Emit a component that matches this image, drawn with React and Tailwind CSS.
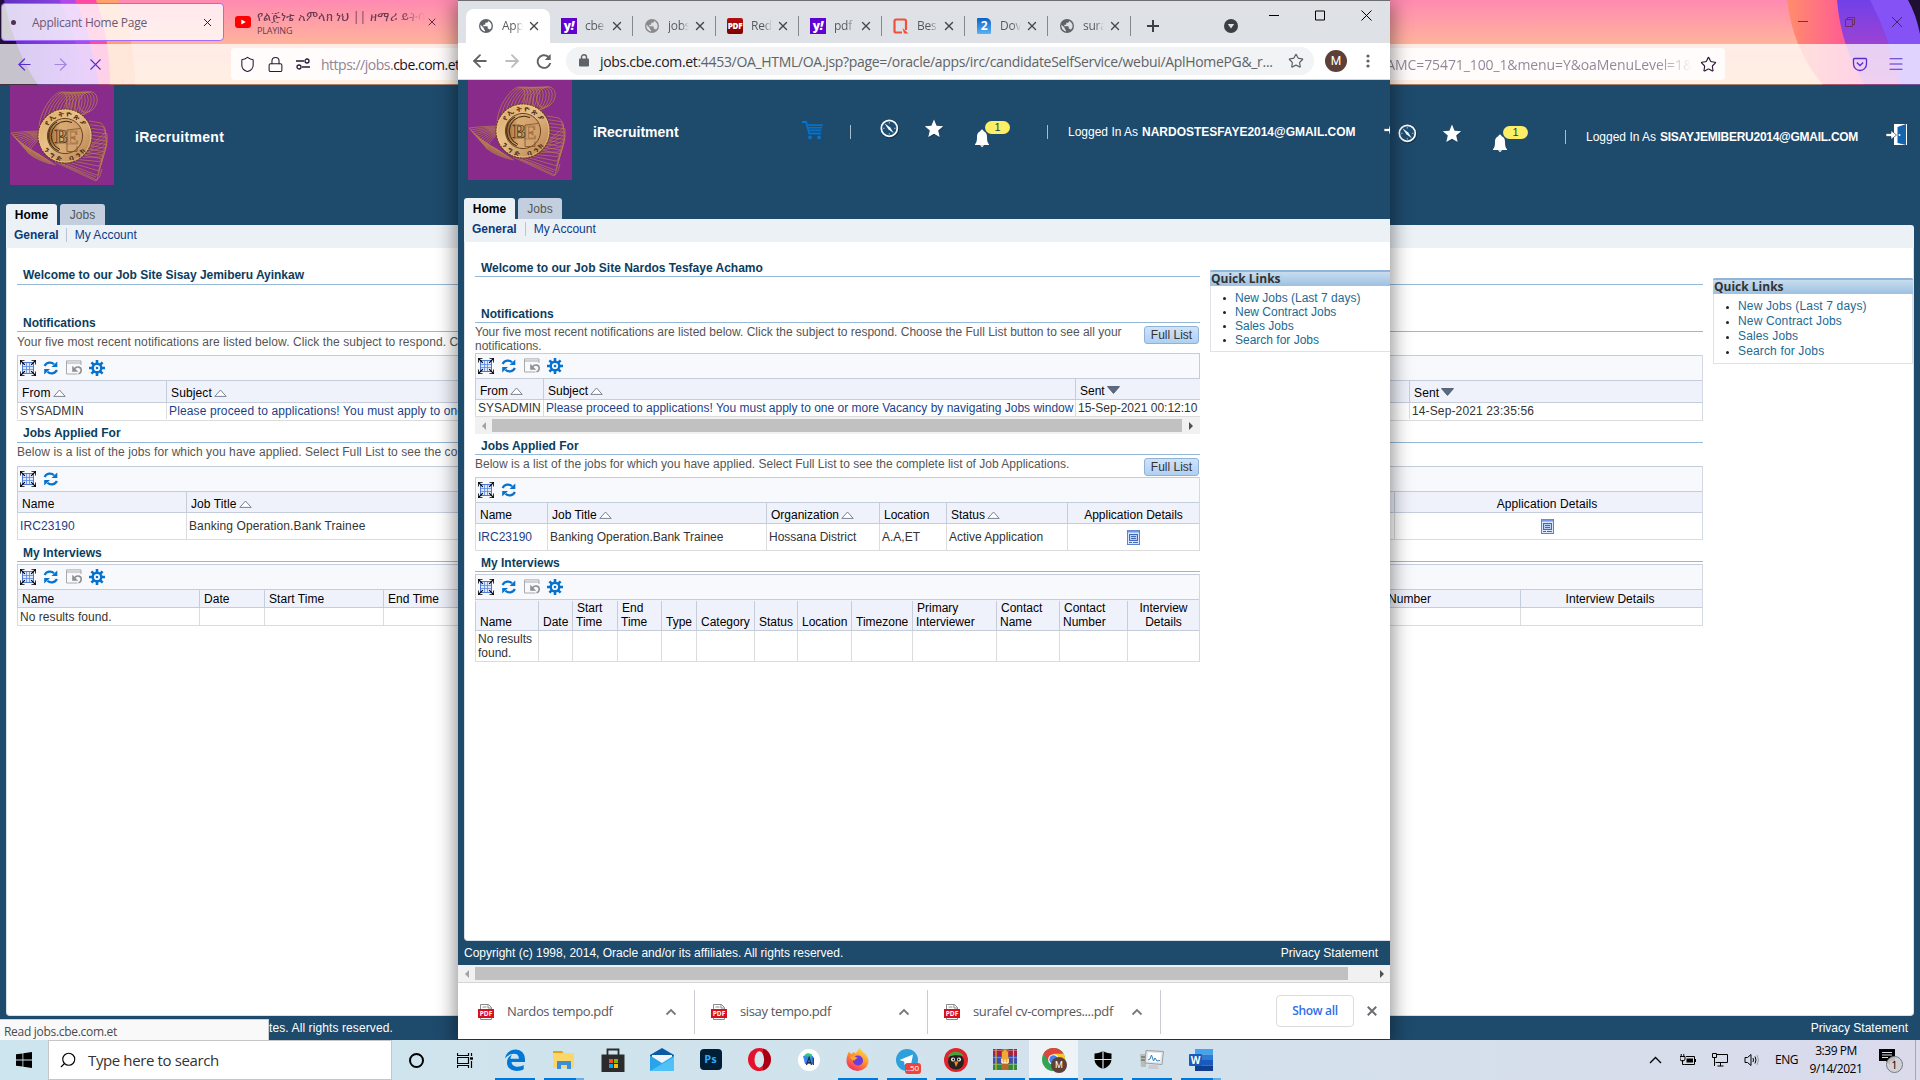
import React from "react";
import { ArrowLeft, ArrowRight, X, Shield, Lock, Star, Menu, Search } from "lucide-react";

const SEGOE = "font-['Open_Sans','Noto_Sans',sans-serif]";
const ARIAL = "font-['Liberation_Sans',Arial,sans-serif]";

/* ---------- Oracle page artwork ---------- */

function CbeLogo() {
  const n = Array.from({ length: 11 }, (_, i) => i);
  return (
    <svg width="104" height="100" viewBox="0 0 104 100" className="block shrink-0 self-start">
      <defs>
        <linearGradient id="coin" x1="0" y1="0" x2="1" y2="1">
          <stop offset="0" stopColor="#d9a763" />
          <stop offset="0.4" stopColor="#e9c08a" />
          <stop offset="1" stopColor="#b27b48" />
        </linearGradient>
        <linearGradient id="coinIn" x1="0" y1="0" x2="1" y2="0">
          <stop offset="0" stopColor="#8a5b2a" />
          <stop offset="0.35" stopColor="#d9ab72" />
          <stop offset="1" stopColor="#cf9c6a" />
        </linearGradient>
        <path id="arcTop" d="M35.200 51a19.800 19.800 0 0 1 39.600 0" />
        <path id="arcBottom" d="M29.800 51a25.200 25.200 0 0 0 50.400 0" />
      </defs>
      <rect width="104" height="100" fill="#882b8a" />
      <g fill="none" stroke="#b98546" strokeWidth="0.65">
        {n.map((i) => (
          <ellipse key={i} cx={43 + i * 3.5} cy={29 - i * 1.2} rx={10 - i * 0.15} ry={24 - i * 1.3} transform={`rotate(${26 + i * 0.6} ${43 + i * 3.5} ${29 - i * 1.2})`} />
        ))}
        {n.map((i) => (
          <path key={i} d={`M30 ${46 + i * 0.9} Q${16 + i} ${46 + i * 0.9} ${1 + i * 1.7} ${48 + i * 2} Q${9 + i * 2} ${58 + i * 1.9} ${30 + i * 1.6} ${70 + i}`} />
        ))}
        {n.map((i) => (
          <path key={i} d={`M${79 - i * 0.6} ${36 + i * 3.4} L${91 + Math.min(i, 3) * 2 - Math.max(0, i - 6) * 1.2} ${38 + i * 3.6} Q${98 - Math.max(0, i - 4) * 1.4} ${45 + i * 4} ${94 - i * 0.7} ${49 + i * 4.600} L${74 - i * 2.2} ${66 + i * 1.3}`} />
        ))}
        <path d="M45 77 86 96Q91 92 92 84M50 78l36 14" />
      </g>
      <circle cx="55" cy="51" r="27" fill="url(#coin)" stroke="#6d431f" strokeWidth="1.4" strokeDasharray="2 .9" />
      <circle cx="55" cy="51" r="26" fill="none" stroke="#f0cc96" strokeWidth="0.7" />
      <g fill="#4a2c14" fontSize="7.500" fontWeight="bold" fontFamily="sans-serif">
        <text><textPath href="#arcTop" startOffset="50%" textAnchor="middle" textLength="42">የኢትዮጵያ</textPath></text>
        <text><textPath href="#arcBottom" startOffset="50%" textAnchor="middle" textLength="48">ንግድ ባንክ</textPath></text>
      </g>
      <circle cx="55" cy="51" r="17.600" fill="url(#coinIn)" stroke="#6a4420" strokeWidth="1" />
      <path d="M62 37.500A14.500 14.500 0 0 0 50 64.500M47 37a16 16 0 0 0 2 29" fill="none" stroke="#3e2510" strokeWidth="1" />
      <path d="M57 66.500V45l13-1.500M57 66.500h10v-5" fill="none" stroke="#7a5028" strokeWidth="0.8" />
      <g fontFamily="Liberation Serif, serif" fontWeight="bold" textAnchor="middle">
        <text x="51" y="58" fontSize="19" fill="#c2915a" stroke="#3e2510" strokeWidth="0.7">B</text>
        <text x="62" y="58.500" fontSize="19" fill="#d2a06c" stroke="#8f6236" strokeWidth="0.6">E</text>
      </g>
    </svg>
  );
}

function Compass() {
  return (
    <svg width="20" height="20" viewBox="0 0 20 20" className="-mr-[2px] block shrink-0">
      <circle cx="10" cy="10" r="8.4" fill="none" stroke="#12324b" strokeWidth="1.6" />
      <circle cx="9.3" cy="9.3" r="8" fill="#1d4f75" stroke="#fff" strokeWidth="1.7" />
      <path d="M9.3 3v1.6M9.3 14v1.6M3 9.3h1.6M14 9.3h1.6" stroke="#9db6c8" strokeWidth="1" />
      <path d="M4.400 4.200 10.200 8.600 13.800 14.200 8.400 10.300Z" fill="#fff" />
    </svg>
  );
}

function SolidStar() {
  return (
    <svg width="20" height="20" viewBox="0 0 20 20" className="block shrink-0">
      <path d="M10.8 1.4 13.4 7.2 19.6 8 15.1 12.3 16.2 18.8 10.8 15.8 5.2 18.8 6.4 12.3 1.8 8 8 7.2Z" fill="#12324b" opacity=".7" />
      <path d="M10 .6 12.6 6.8 19.2 7.3 14.2 11.6 15.7 18.1 10 14.7 4.3 18.1 5.8 11.6.8 7.3 7.4 6.8Z" fill="#fff" />
    </svg>
  );
}

function BellBadge() {
  return (
    <div className="relative mt-1 h-[26px] w-[35px] shrink-0">
      <svg width="15" height="19" viewBox="0 0 15 19" className="absolute top-[8px] left-0">
        <path d="M7 .5c1 0 1.4.8 1.4 1.6C11 3 12 5 12 8c0 4 .5 5.500 2 7.300V16H0v-.7C1.500 13.500 2 12 2 8c0-3 1-5 3.600-5.900C5.600 1.300 6 .5 7 .5Z" fill="#fff" />
        <path d="M5 16.200h4.200L7 18.200Z" fill="#fff" />
      </svg>
      <div className="absolute top-0 left-[10px] flex h-[13px] w-[25px] items-center justify-center rounded-full bg-[#fdee66] text-[11px] leading-none text-[#1e3a55]">1</div>
    </div>
  );
}

function Door() {
  return (
    <svg width="22" height="24" viewBox="0 0 22 24" className="block shrink-0">
      <path d="M8 1h13v21H8z" fill="#fff" />
      <path d="M11.500 4 20 1v21l-8.500-2Z" fill="#1463ad" />
      <circle cx="13.500" cy="12" r="1" fill="#fff" />
      <path d="M0 10.500h5V7.500l5.500 4.500L5 16.500v-3H0Z" fill="#fff" stroke="#12324b" strokeWidth=".6" />
    </svg>
  );
}

function Cart() {
  return (
    <svg width="21" height="19" viewBox="0 0 21 19" className="block shrink-0">
      <path d="M0 1h4.200l3 11.500H19" fill="none" stroke="#0572ce" strokeWidth="1.800" />
      <path d="M5.500 3.200H21l-1.800 7H7.400Z" fill="#0572ce" />
      <path d="M6.500 5.500h14M7 8h13" stroke="#1e4a6c" strokeWidth="1" />
      <circle cx="8" cy="16.500" r="2" fill="#0572ce" />
      <circle cx="17" cy="16.500" r="2" fill="#0572ce" />
    </svg>
  );
}

function Detach() {
  return (
    <svg width="16" height="16" viewBox="0 0 16 16" className="block">
      <rect x="2.500" y="2.500" width="11" height="11" fill="#dfe9fb" stroke="#4a78d4" />
      <path d="M3 6.500h10M3 9.500h10M6.500 3v10M9.500 3v10" stroke="#5a86dc" strokeWidth=".8" />
      <path d="M0 4.500V0h4.500M11.500 0H16v4.500M16 11.500V16h-4.500M4.500 16H0v-4.500" fill="none" stroke="#000" strokeWidth="1.600" />
      <path d="M.5.500l4.300 4.300M15.500.500l-4.300 4.300M.5 15.500l4.300-4.300M15.500 15.500l-4.300-4.300" stroke="#000" strokeWidth="1.200" />
    </svg>
  );
}

function Refresh() {
  return (
    <svg width="16" height="16" viewBox="0 0 16 16" className="block">
      <path d="M1.600 6C3.500 2 8.500 1.800 11 4.300" fill="none" stroke="#0572ce" strokeWidth="2.200" />
      <path d="M14.300 1.500v5.500H8.500Z" fill="#0572ce" />
      <path d="M13.900 10C12 14 7 14.200 4.500 11.700" fill="none" stroke="#0572ce" strokeWidth="2.200" />
      <path d="M1.200 14.500V9H7Z" fill="#0572ce" />
    </svg>
  );
}

function Reset() {
  return (
    <svg width="16" height="16" viewBox="0 0 16 16" className="block">
      <path d="M11.500 14H.5V.9h14.500V5" fill="none" stroke="#a9a9a9" />
      <path d="M1 3h14" stroke="#a9a9a9" />
      <path d="M8 9.200C11 5.500 15.500 7 15.200 10.500c-.2 2-1.500 3-2.700 3.300" fill="none" stroke="#8f8f8f" strokeWidth="1.600" />
      <path d="M6.200 5.800v6h6Z" fill="#8f8f8f" />
    </svg>
  );
}

function Gear() {
  return (
    <svg width="16" height="16" viewBox="0 0 16 16" className="block">
      <g stroke="#0572ce" strokeWidth="2.600">
        <path d="M8 0v3.500M8 12.500V16M0 8h3.500M12.500 8H16M2.400 2.400l2.300 2.300M11.300 11.300l2.300 2.300M2.400 13.600l2.300-2.300M11.300 4.700l2.300-2.300" />
      </g>
      <circle cx="8" cy="8" r="4.300" fill="none" stroke="#0572ce" strokeWidth="2.400" />
      <circle cx="8" cy="8" r="1.300" fill="#0572ce" />
    </svg>
  );
}

const SortUp = () => (
  <svg width="13" height="8" viewBox="0 0 13 8" className="mt-px ml-[2px] block shrink-0">
    <path d="M.8 7.400h11.400L6.500 1Z" fill="#fff" stroke="#6b7687" strokeWidth=".9" />
  </svg>
);
const SortDown = () => (
  <svg width="13" height="8" viewBox="0 0 13 8" className="ml-[2px] block shrink-0">
    <path d="M.5.600h12L6.500 7.400Z" fill="#5a6b82" stroke="#3e4c60" strokeWidth=".8" />
  </svg>
);

function DetailIcon() {
  return (
    <svg width="13" height="15" viewBox="0 0 13 15" className="mx-auto block">
      <rect x=".5" y=".5" width="12" height="14" fill="#dbe7fb" stroke="#5b82cf" />
      <path d="M1 1.500h11" stroke="#6f97e3" strokeWidth="2" />
      <rect x="2.500" y="4.500" width="8" height="6" fill="#b8cef4" stroke="#4169b8" />
      <path d="M4 6.500h5M4 8.500h5M2 12.500h3M6 12.500h5" stroke="#4169b8" />
    </svg>
  );
}

/* ---------- Oracle page structure ---------- */

function PageHeader({ height, left, email, cart, jobs, title }) {
  return (
    <div className={`flex shrink-0 flex-col overflow-hidden bg-[#1e4a6c] text-white ${height}`}>
      <div className="flex h-[104px] shrink-0 items-center whitespace-nowrap">
        <div className={`flex h-full shrink-0 items-center pl-[10px] ${left}`}>
          <CbeLogo />
          <span className={`ml-[21px] text-[14px] font-bold ${title}`}>iRecruitment</span>
          {cart && (
            <div className="ml-auto flex items-center">
              <div className="mb-[4px]"><Cart /></div>
              <div className="mr-[29px] ml-[27px] h-[14px] w-px bg-[#a8bccb]" />
            </div>
          )}
        </div>
        <div className="mb-[6px]"><Compass /></div>
        <div className="mb-[6px] ml-[26px]"><SolidStar /></div>
        <div className="ml-[31px]"><BellBadge /></div>
        <div className="ml-[37px] h-[14px] w-px shrink-0 bg-[#a8bccb]" />
        <span className="ml-[20px] text-[12px]">Logged In As</span>
        <span className={`ml-[4px] text-[12px] font-bold ${email.cls}`}>{email.text}</span>
        <div className="mb-[5px] ml-[28px]"><Door /></div>
      </div>
      <div className="mt-auto flex h-[21px] gap-[3px] pl-[6px] text-[12px]">
        <div className="flex w-[51px] items-center justify-center rounded-t-[3px] bg-[#ecf1f6] font-bold text-black">Home</div>
        <div className={`flex items-center justify-center rounded-t-[3px] bg-[#c3cfdf] text-[#555] ${jobs}`}>Jobs</div>
      </div>
    </div>
  );
}

const SubNav = ({ cls, gap }) => (
  <div className={`flex h-[23px] shrink-0 items-start bg-[#ecf1f6] pt-[3px] pl-[8px] text-[12px] leading-[14px] text-[#0b3a8a] ${cls}`}>
    <span className="font-bold text-[#0b3a7a]">General</span>
    <span className={`mr-[8px] h-[14px] w-px bg-[#b9c5d6] ${gap}`} />
    <span>My Account</span>
  </div>
);

const Heading = ({ cls, children }) => (
  <div className={`flex shrink-0 items-end border-b border-[#94b8d6] pl-[6px] text-[12px] leading-[14px] font-bold text-[#0b3d5e] ${cls}`}>{children}</div>
);

const FullList = ({ cls }) => (
  <div className={`mr-px flex h-[18px] w-[55px] shrink-0 items-center justify-center rounded-[3px] border border-[#8fb2d8] bg-linear-to-b from-[#cfe3f9] to-[#afd0f2] text-[12px] text-[#333] ${cls}`}>Full List</div>
);

const Tools = ({ all }) => (
  <div className="flex h-[25px] items-center gap-[7px] border-t border-l border-[#c5cddb] bg-[#f8f9fd] pl-[2px]">
    <Detach />
    <Refresh />
    {all && <Reset />}
    {all && <Gear />}
  </div>
);

function Grid({ all, cols, head, row, open, cls = "" }) {
  return (
    <div className={`shrink-0 overflow-hidden text-[12px] leading-[14px] whitespace-nowrap ${cls} ${open ? "" : "border-r border-[#d3d9e4]"}`}>
      <div className={open ? "border-r border-[#c5cddb]" : ""}><Tools all={all} /></div>
      <div className={`flex border-t border-[#c5cddb] bg-[#f0f2fb] text-black ${head}`}>
        {cols.map((c, i) => (
          <div key={i} className={`flex shrink-0 border-l border-[#c5cddb] ${c.w} ${c.center ? "justify-center text-center" : c.two ? "pl-[3px] indent-[1px]" : "pl-[4px]"} ${c.t.includes("\n") ? "" : "pt-[5px]"} ${c.headPad || ""}`}>
            <span className="whitespace-pre">{c.t}</span>
            {c.sort === "up" && <span className="pt-[2px]"><SortUp /></span>}
            {c.sort === "down" && <span className="pt-[2px]"><SortDown /></span>}
          </div>
        ))}
      </div>
      <div className={`flex border-t border-b border-[#dcdcdc] border-t-[#c5cddb] bg-white text-[#333] ${row}`}>
        {cols.map((c, i) => (
          <div key={i} className={`flex shrink-0 items-center border-l border-[#dcdcdc] whitespace-pre ${c.w} ${c.center ? "justify-center" : "pl-[2px]"} ${c.link ? "text-[#1b3f8b]" : ""}`}>
            {c.d}
          </div>
        ))}
      </div>
    </div>
  );
}

function QuickLinks({ cls, line }) {
  return (
    <div className={`shrink-0 border border-t-0 border-[#dfe3e8] ${cls}`}>
      <div className="-mx-px flex h-[16px] items-center rounded-t-[2px] border-t-2 border-[#8fb5da] bg-linear-to-b from-[#c9dcee] to-[#9cc1e2] pl-[1px] font-['Open_Sans',sans-serif] text-[12px] leading-none font-bold text-[#333]">Quick Links</div>
      <ul className={`mt-[5px] text-[12px] text-[#1b6a94] ${line}`}>
        {["New Jobs (Last 7 days)", "New Contract Jobs", "Sales Jobs", "Search for Jobs"].map((t) => (
          <li key={t} className="flex items-center">
            <span className="mt-px mr-[9px] ml-[12px] h-[3px] w-[3px] rounded-full bg-[#222]" />
            {t}
          </li>
        ))}
      </ul>
    </div>
  );
}

/* ---------- Firefox window ---------- */

function ThemeArt() {
  return (
    <svg width="1920" height="85" viewBox="0 0 1920 85" className="absolute inset-0">
      <defs>
        <linearGradient id="sky" x1="0" y1="0" x2="0" y2="1">
          <stop offset="0" stopColor="#ff8ab2" />
          <stop offset=".52" stopColor="#ffb49c" />
          <stop offset="1" stopColor="#ffc08f" />
        </linearGradient>
        <linearGradient id="lp" x1="0" x2="1">
          <stop offset="0" stopColor="#5b2fc0" />
          <stop offset="1" stopColor="#a04bf0" />
        </linearGradient>
        <linearGradient id="rp" x1="0" y1="0" x2="0" y2="1">
          <stop offset="0" stopColor="#7140e8" />
          <stop offset="1" stopColor="#c445c0" />
        </linearGradient>
        <linearGradient id="ro" x1="0" x2="1">
          <stop offset="0" stopColor="#ff8d6c" />
          <stop offset=".6" stopColor="#ff4aa2" />
        </linearGradient>
      </defs>
      <rect width="1920" height="85" fill="url(#sky)" />
      <path d="M0 0h118q17 38 17 85H0Z" fill="#ffa06d" />
      <path d="M0 0h96q14 38 14 85H0Z" fill="#ff4aa2" />
      <path d="M0 0h75q14 28 24 85H0Z" fill="#b048ea" />
      <path d="M0 0h60q16 40 28 85H0Z" fill="url(#lp)" />
      <path d="M0 0h4q10 50 34 85H0Z" fill="#221038" />
      <path d="M1787 0q6 50 36 85h97V0Z" fill="url(#ro)" />
      <path d="M1837 0q4 48 28 85h55V0Z" fill="url(#rp)" />
      <path d="M1870 0q20 38 30 85h20V0Z" fill="#8552f5" />
      <path d="M1908 0q8 14 12 34V0Z" fill="#1d1033" />
      <rect y="84" width="1920" height="1" fill="#6b4a50" opacity=".55" />
    </svg>
  );
}

function FirefoxWindow() {
  return (
    <div className="flex h-[1040px] w-[1920px] flex-col bg-[#1e4a6c]">
      <div className={`relative flex h-[85px] shrink-0 flex-col overflow-hidden ${SEGOE}`}>
        <ThemeArt />
        <div className="relative flex h-[44px] items-center pl-px">
          <div className="flex h-[38px] w-[223px] items-center rounded-[4px] border border-[#a36bff] bg-white/80 pr-[9px] pl-[9px] text-[12px] text-[#6b5872]">
            <span className="mr-[16px] h-[5px] w-[5px] rounded-full bg-[#4a3350]" />
            <span className="pt-px tracking-[-0.25px]">Applicant Home Page</span>
            <X size={13} strokeWidth={1.8} className="ml-auto text-[#2a1838]" />
          </div>
          <div className="flex w-[233px] items-center pl-[11px]">
            <svg width="16" height="12" viewBox="0 0 16 12" className="shrink-0">
              <rect width="16" height="12" rx="3" fill="#f00" />
              <path d="M6.300 3.400v5.200L10.800 6Z" fill="#fff" />
            </svg>
            <div className="ml-[6px] flex w-[168px] flex-col overflow-hidden text-[#6a3a52]">
              <span className="bg-linear-to-r from-[#6a3a52] from-85% to-transparent bg-clip-text text-[12.5px] leading-[17px] whitespace-nowrap text-transparent">የልጅነቴ አምላክ ነህ || ዘማሪ ይትባ</span>
              <span className="text-[9px] leading-[11px] tracking-[-0.2px]">PLAYING</span>
            </div>
            <X size={12} strokeWidth={1.8} className="ml-px shrink-0 text-[#4a2038]" />
          </div>
          <div className="mr-[17px] ml-auto flex items-center gap-[35px] text-[#6b2f66]">
            <svg width="12" height="12" viewBox="0 0 12 12"><path d="M1 5.500h10" stroke="currentColor" /></svg>
            <svg width="12" height="12" viewBox="0 0 12 12" fill="none" stroke="currentColor"><path d="M1.500 3.500h7v7h-7zM3.500 3.500v-2h7v7h-2" /></svg>
            <svg width="12" height="12" viewBox="0 0 12 12"><path d="M1 1l10 10M11 1L1 11" stroke="#43207a" /></svg>
          </div>
        </div>
        <div className="relative flex h-[40px] items-center bg-white/75 text-[#5b2bd0]">
          <ArrowLeft size={19} strokeWidth={1.5} className="ml-[15px]" />
          <ArrowRight size={19} strokeWidth={1.5} className="ml-[17px] opacity-45" />
          <X size={19} strokeWidth={1.4} className="ml-[16px]" />
          <div className="ml-[126px] flex h-[32px] w-[1494px] items-center rounded-[4px] bg-white/85 pl-[8px] text-[14px] text-[#8f8498]">
            <Shield size={17} strokeWidth={1.5} className="text-[#2a1838]" />
            <Lock size={17} strokeWidth={1.5} className="ml-[11px] text-[#2a1838]" />
            <svg width="16" height="12" viewBox="0 0 16 12" fill="none" stroke="#2a1838" strokeWidth="1.300" className="ml-[11px]">
              <path d="M1 3h8M7 9h8" /><circle cx="12" cy="3" r="2" /><circle cx="4" cy="9" r="2" />
            </svg>
            <span className="ml-[10px] tracking-[-0.5px]">https://jobs.<span className="text-[#1d0f2b]">cbe.com.et</span></span>
            <span className="ml-auto bg-linear-to-r from-[#8f8498] from-88% to-white bg-clip-text tracking-[-0.1px] text-transparent">AMC=75471_100_1&amp;menu=Y&amp;oaMenuLevel=1&amp;</span>
            <Star size={17} strokeWidth={1.6} className="mr-[8px] ml-[7px] text-[#2a1838]" />
          </div>
          <svg width="16" height="15" viewBox="0 0 16 15" fill="none" stroke="currentColor" strokeWidth="1.300" className="ml-[127px]">
            <path d="M2.500 1.500h11a1 1 0 0 1 1 1V7a6.500 6.500 0 0 1-13 0V2.500a1 1 0 0 1 1-1Z" />
            <path d="M4.800 5.500 8 8.500l3.200-3" />
          </svg>
          <Menu size={18} strokeWidth={1.5} className="ml-[19px]" />
        </div>
      </div>

      <div className={`flex min-h-0 flex-1 flex-col ${ARIAL}`}>
        <PageHeader height="h-[140px]" left="w-[1398px]" title="tracking-[0.3px]" jobs="w-[45px]" email={{ text: "SISAYJEMIBERU2014@GMAIL.COM", cls: "-mr-[0.3px] tracking-[-0.27px]" }} />
        <SubNav cls="ml-[6px] mr-[6px] rounded-tr-[3px]" gap="ml-[7px]" />
        <div className="mr-[6px] ml-[6px] flex h-[768px] shrink-0 rounded-b-[4px] border-x border-b border-[#d8e0ea] bg-white pl-[10px]">
          <div className="flex w-[1686px] shrink-0 flex-col">
            <Heading cls="h-[37px] pb-[2px] tracking-[-0.03px]">Welcome to our Job Site Sisay Jemiberu Ayinkaw</Heading>
            <Heading cls="h-[47px] pb-px">Notifications</Heading>
            <div className="h-[23px] pt-[3px] text-[12px] leading-[14px] tracking-[0.08px] whitespace-nowrap text-[#555]">Your five most recent notifications are listed below. Click the subject to respond. Choose the Full List button to see all your notifications.</div>
            <Grid all cls="tracking-[0.13px]" head="h-[22px]" row="h-[19px] pb-px" cols={[
              { t: "From", sort: "up", d: "SYSADMIN", w: "w-[149px]" },
              { t: "Subject", sort: "up", d: "Please proceed to applications! You must apply to one or more Vacancy by navigating Jobs window", w: "w-[1243px]", link: true },
              { t: "Sent", sort: "down", d: "14-Sep-2021 23:35:56", w: "w-[293px]" },
            ]} />
            <Heading cls="h-[22px] pb-[2px]">Jobs Applied For</Heading>
            <div className="h-[23px] pt-[2px] text-[12px] leading-[14px] tracking-[0.08px] whitespace-nowrap text-[#555]">Below is a list of the jobs for which you have applied. Select Full List to see the complete list of Job Applications.</div>
            <Grid cls="tracking-[0.1px]" head="h-[21px]" row="h-[28px]" cols={[
              { t: "Name", d: "IRC23190", w: "w-[169px]", link: true },
              { t: "Job Title", sort: "up", d: "Banking Operation.Bank Trainee", w: "w-[1208px]" },
              { t: "Application Details", d: <DetailIcon />, w: "w-[305px]", center: true },
            ]} />
            <Heading cls="mb-[2px] h-[22px] pb-px">My Interviews</Heading>
            <Grid all cls="tracking-[0.05px]" head="h-[18px]" row="h-[19px]" cols={[
              { t: "Name", d: "No results found.", w: "w-[182px]", headPad: "!pt-[2px]" },
              { t: "Date", w: "w-[65px]", headPad: "!pt-[2px]" },
              { t: "Start Time", w: "w-[119px]", headPad: "!pt-[2px]" },
              { t: "End Time", w: "w-[1000px]", headPad: "!pt-[2px]" },
              { t: "Number", w: "w-[137px]", headPad: "!pt-[2px]" },
              { t: "Interview Details", w: "w-[179px]", center: true, headPad: "!pt-[2px]" },
            ]} />
          </div>
          <QuickLinks cls="ml-[10px] mt-[30px] h-[86px] w-[200px]" line="leading-[15px] tracking-[0.15px]" />
        </div>
        <div className="flex h-[24px] items-center justify-between pr-[12px] pl-[6px] text-[12px] text-white">
          <span className="tracking-[0.1px]">Copyright (c) 1998, 2014, Oracle and/or its affiliates. All rights reserved.</span>
          <span>Privacy Statement</span>
        </div>
      </div>
      <div className={`absolute top-[1019px] left-0 flex h-[21px] w-[269px] items-center border-t border-r border-[#cfcfcf] bg-[#f9f9f9] pt-[3px] pl-[4px] text-[12px] leading-[16px] tracking-[-0.3px] text-[#4a4a4a] ${SEGOE}`}>Read jobs.cbe.com.et</div>
    </div>
  );
}

/* ---------- Chrome window ---------- */

const Globe = ({ color = "#5f6368" }) => (
  <svg width="16" height="16" viewBox="0 0 24 24" className="shrink-0">
    <path fill={color} d="M12 1.500a10.500 10.500 0 1 0 0 21 10.500 10.500 0 0 0 0-21Zm-1.500 18.800C6.500 19.500 3.600 16.100 3.600 12c0-.6.100-1.200.2-1.700l4.900 4.600v1c0 1.100.8 2 1.800 2v2.400Zm7.100-2.700c-.3-.8-1-1.400-2-1.400h-1v-3c0-.6-.5-1-1-1H8v-2h2c.6 0 1-.5 1-1.100v-2h2c1.200 0 2.100-1 2.100-2.100v-.4c3 1.200 5.300 4.200 5.300 7.400 0 2.200-1 4.200-2.800 5.600Z" />
  </svg>
);
const Yahoo = () => (
  <div className="flex h-4 w-4 shrink-0 items-center justify-center bg-[#6001d2] pb-px font-['Open_Sans',sans-serif] text-[12px] leading-none font-extrabold text-white">y<i>!</i></div>
);
const PdfFav = () => (
  <div className="flex h-4 w-4 shrink-0 items-center justify-center rounded-[2px] bg-linear-to-b from-[#b50f0f] to-[#7c0000] font-['Open_Sans',sans-serif] text-[8px] leading-none font-extrabold tracking-[-0.3px] text-white">PDF</div>
);
const BestFav = () => (
  <svg width="16" height="16" viewBox="0 0 16 16" className="shrink-0">
    <path d="M9 14.500H3a1.500 1.500 0 0 1-1.500-1.500V3A1.500 1.500 0 0 1 3 1.500h8.500A1.500 1.500 0 0 1 13 3v9" fill="none" stroke="#f0503c" strokeWidth="2.200" />
    <path d="M9.500 10 15.500 15.500H11Z" fill="#f0503c" />
  </svg>
);
const TwoFav = () => (
  <div className="mx-px flex h-4 w-[14px] shrink-0 items-center justify-center rounded-[1px] rounded-tr-[5px] bg-linear-to-b from-[#0f5fc4] to-[#56b4f5] font-['Open_Sans',sans-serif] text-[12px] leading-none font-bold text-white">2</div>
);

const TABS = [
  ["cbe", <Yahoo key="i" />],
  ["jobs", <Globe key="i" color="#8a8a8a" />],
  ["Red", <PdfFav key="i" />],
  ["pdf", <Yahoo key="i" />],
  ["Bes", <BestFav key="i" />],
  ["Dov", <TwoFav key="i" />],
  ["sura", <Globe key="i" />],
];

function PdfFile() {
  return (
    <svg width="16" height="16" viewBox="0 0 16 16" className="shrink-0">
      <path d="M2.500 15.500V.5h8l3 3v12Z" fill="#fff" stroke="#8a8a8a" />
      <path d="M10 .5v3.500h3.500M4.500 3h4" fill="none" stroke="#8a8a8a" />
      <rect y="5" width="16" height="9" fill="#d80f1c" />
      <text x="8" y="12" textAnchor="middle" fontSize="6.500" fontWeight="bold" fontFamily="Open Sans, sans-serif" fill="#fff">PDF</text>
    </svg>
  );
}

const DownloadItem = ({ name }) => (
  <div className="flex h-[44px] w-[233px] items-center border-r border-[#c9ccd0] pl-[16px]">
    <PdfFile />
    <span className="ml-[13px] text-[13px] tracking-[-0.35px] whitespace-nowrap text-[#55585c]">{name}</span>
    <svg width="12" height="12" viewBox="0 0 12 12" className="mr-[17px] ml-auto"><path d="M1.500 8.500 6 4l4.500 4.500" fill="none" stroke="#77797c" strokeWidth="1.800" /></svg>
  </div>
);

const Tri = ({ dir, color }) => (
  <svg width="4" height="8" viewBox="0 0 4 8" className="shrink-0">
    <path d={dir === "l" ? "M4 0v8L0 4Z" : "M0 0v8l4-4Z"} fill={color} />
  </svg>
);

function ChromeWindow() {
  return (
    <div className="absolute top-0 left-[458px] flex h-[1039px] w-[932px] flex-col overflow-hidden border-t border-[#6d6d70] bg-white">
      <div className={`flex h-[42px] shrink-0 items-center bg-[#dee1e6] ${SEGOE} text-[12px] tracking-[-0.25px] text-[#54575b]`}>
        <div className="ml-[8px] flex h-[34px] w-[84px] items-center self-end rounded-t-[8px] bg-white pl-[12px]">
          <Globe />
          <span className="ml-[8px] w-[21px] overflow-hidden bg-linear-to-r from-[#54575b] from-60% to-white bg-clip-text text-transparent">App</span>
          <X size={14} strokeWidth={2.400} className="ml-[4px] shrink-0 text-[#45484c]" />
        </div>
        {TABS.map(([t, icon], i) => (
          <div key={i} className="flex w-[83px] shrink-0 items-center pt-[8px] pl-[11px]">
            {icon}
            <span className="ml-[8px] w-[21px] overflow-hidden bg-linear-to-r from-[#54575b] from-60% to-[#dee1e6] bg-clip-text text-transparent">{t}</span>
            <X size={14} strokeWidth={2.400} className="ml-[4px] shrink-0 text-[#45484c]" />
            <span className="ml-auto h-[20px] w-px bg-[#85888d]" />
          </div>
        ))}
        <svg width="14" height="14" viewBox="0 0 14 14" className="mt-[8px] ml-[15px]"><path d="M7 1v12M1 7h12" stroke="#3c4043" strokeWidth="2" /></svg>
        <svg width="14" height="14" viewBox="0 0 14 14" className="mt-[8px] ml-[64px]"><circle cx="7" cy="7" r="7" fill="#3c4043" /><path d="M3.800 5h6.400L7 9.500Z" fill="#dee1e6" /></svg>
        <div className="mr-[18px] ml-auto flex gap-[36px] self-start pt-[9px]">
          <svg width="10" height="11" viewBox="0 0 10 11"><path d="M0 5.500h10" stroke="#000" /></svg>
          <svg width="10" height="11" viewBox="0 0 10 11"><path d="M.5 1h9v9h-9z" fill="none" stroke="#000" /></svg>
          <svg width="11" height="11" viewBox="0 0 11 11"><path d="M.5.500l10 10M10.500.500l-10 10" stroke="#000" /></svg>
        </div>
      </div>
      <div className={`flex h-[37px] shrink-0 items-center border-b border-[#d4d6d9] bg-white pl-[12px] text-[#5f6368] ${SEGOE}`}>
        <ArrowLeft size={20} strokeWidth={2.200} />
        <ArrowRight size={20} strokeWidth={2.200} className="ml-[12px] text-[#bbbdc0]" />
        <svg width="20" height="20" viewBox="0 0 24 24" className="ml-[12px]"><path fill="currentColor" d="M20 3.500 17.700 5.800A8.800 8.800 0 1 0 20.700 14.500H18.300A6.500 6.500 0 1 1 16 7.500L13 10.700h7Z" /></svg>
        <div className="ml-[12px] flex h-[28px] w-[748px] items-center rounded-full bg-[#f1f3f4] pl-[13px] text-[14px]">
          <svg width="10" height="13" viewBox="0 0 10 13" className="mb-px"><rect y="4.500" width="10" height="8" rx="1" fill="currentColor" /><path d="M2.500 5V3.200a2.500 2.500 0 0 1 5 0V5" fill="none" stroke="currentColor" strokeWidth="1.400" /></svg>
          <span className="ml-[11px] tracking-[-0.32px] whitespace-nowrap"><span className="text-[#202124]">jobs.cbe.com.et</span>:4453/OA_HTML/OA.jsp?page=/oracle/apps/irc/candidateSelfService/webui/AplHomePG&amp;_r...</span>
          <Star size={16} strokeWidth={1.800} className="mr-[10px] ml-auto" />
        </div>
        <div className="ml-[11px] flex h-[22px] w-[22px] items-center justify-center rounded-full bg-[#5d4037] font-['Roboto',sans-serif] text-[12px] text-white">M</div>
        <svg width="4" height="14" viewBox="0 0 4 14" className="ml-[19px]"><g fill="currentColor"><circle cx="2" cy="2" r="1.600" /><circle cx="2" cy="7" r="1.600" /><circle cx="2" cy="12" r="1.600" /></g></svg>
      </div>

      <div className={`flex h-[885px] shrink-0 flex-col overflow-hidden bg-[#1e4a6c] ${ARIAL}`}>
        <PageHeader height="h-[139px]" left="w-[422px]" title="" cart jobs="w-[44px]" email={{ text: "NARDOSTESFAYE2014@GMAIL.COM", cls: "tracking-[-0.02px]" }} />
        <SubNav cls="ml-[6px]" gap="ml-[8px]" />
        <div className="ml-[6px] flex h-[699px] shrink-0 rounded-bl-[4px] border-b border-l border-[#d8e0ea] bg-white pl-[10px]">
          <div className="flex w-[725px] shrink-0 flex-col">
            <Heading cls="h-[35px] pb-px">Welcome to our Job Site Nardos Tesfaye Achamo</Heading>
            <Heading cls="h-[46px] pb-px">Notifications</Heading>
            <div className="flex h-[30px] justify-between pt-[2px] text-[12px] leading-[14px] text-[#555]">
              <p className="w-[660px]">Your five most recent notifications are listed below. Click the subject to respond. Choose the Full List button to see all your notifications.</p>
              <FullList cls="mt-px" />
            </div>
            <Grid all open head="h-[21px]" row="h-[18px]" cols={[
              { t: "From", sort: "up", d: "SYSADMIN", w: "w-[68px]" },
              { t: "Subject", sort: "up", d: "Please proceed to applications! You must apply to one or more Vacancy by navigating Jobs window", w: "w-[532px]", link: true },
              { t: "Sent", sort: "down", d: "15-Sep-2021 00:12:10", w: "w-[125px]" },
            ]} />
            <div className="flex h-[17px] shrink-0 items-center bg-[#f1f1f1]">
              <span className="flex w-[17px] justify-center"><Tri dir="l" color="#a3a3a3" /></span>
              <span className="h-[13px] w-[690px] bg-[#c1c1c1]" />
              <span className="flex flex-1 justify-center"><Tri dir="r" color="#505050" /></span>
            </div>
            <Heading cls="h-[21px] pb-px">Jobs Applied For</Heading>
            <div className="flex h-[22px] justify-between pt-[2px] text-[12px] leading-[14px] text-[#555]">
              <p>Below is a list of the jobs for which you have applied. Select Full List to see the complete list of Job Applications.</p>
              <FullList cls="mt-px" />
            </div>
            <Grid head="h-[21px]" row="h-[28px]" cols={[
              { t: "Name", d: "IRC23190", w: "w-[72px]", link: true },
              { t: "Job Title", sort: "up", d: "Banking Operation.Bank Trainee", w: "w-[219px]" },
              { t: "Organization", sort: "up", d: "Hossana District", w: "w-[113px]" },
              { t: "Location", d: "A.A,ET", w: "w-[67px]" },
              { t: "Status", sort: "up", d: "Active Application", w: "w-[121px]" },
              { t: "Application Details", d: <DetailIcon />, w: "w-[132px]", center: true },
            ]} />
            <Heading cls="mb-[2px] h-[21px] pb-px">My Interviews</Heading>
            <Grid all head="h-[31px] items-stretch pt-px" row="h-[32px]" cols={[
              { t: "\nName", d: "No results\nfound.", w: "w-[63px]" },
              { t: "\nDate", w: "w-[34px]" },
              { t: "Start\nTime", w: "w-[45px]", two: true },
              { t: "End\nTime", w: "w-[44px]", two: true },
              { t: "\nType", w: "w-[35px]" },
              { t: "\nCategory", w: "w-[58px]" },
              { t: "\nStatus", w: "w-[43px]" },
              { t: "\nLocation", w: "w-[54px]" },
              { t: "\nTimezone", w: "w-[61px]" },
              { t: "Primary\nInterviewer", w: "w-[84px]", two: true },
              { t: "Contact\nName", w: "w-[63px]", two: true },
              { t: "Contact\nNumber", w: "w-[68px]", two: true },
              { t: "Interview\nDetails", w: "w-[72px]", center: true },
            ]} />
          </div>
          <QuickLinks cls="ml-[10px] mt-[28px] h-[82px] w-[200px]" line="leading-[14px]" />
        </div>
        <div className="flex h-[24px] items-center justify-between pr-[12px] pl-[6px] text-[12px] text-white">
          <span>Copyright (c) 1998, 2014, Oracle and/or its affiliates. All rights reserved.</span>
          <span>Privacy Statement</span>
        </div>
      </div>
      <div className="flex h-[18px] shrink-0 items-center border-b border-[#d4d6d9] bg-[#f1f1f1]">
        <span className="flex w-[17px] justify-center"><Tri dir="l" color="#a3a3a3" /></span>
        <span className="h-[13px] w-[873px] bg-[#c1c1c1]" />
        <span className="mr-[6px] ml-auto"><Tri dir="r" color="#505050" /></span>
      </div>
      <div className={`flex flex-1 items-center bg-white pt-px pl-[4px] ${SEGOE}`}>
        <DownloadItem name="Nardos tempo.pdf" />
        <DownloadItem name="sisay tempo.pdf" />
        <DownloadItem name="surafel cv-compres....pdf" />
        <div className="mb-[2px] ml-auto flex h-[32px] w-[78px] items-center justify-center rounded-[4px] border border-[#dadce0] text-[12px] font-semibold tracking-[-0.3px] text-[#2f6fe8]">Show all</div>
        <svg width="10" height="10" viewBox="0 0 10 10" className="mr-[13px] mb-[2px] ml-[13px]"><path d="M.8.800l8.400 8.400M9.200.800.800 9.200" stroke="#6b6e72" strokeWidth="2" /></svg>
      </div>
    </div>
  );
}

/* ---------- Taskbar ---------- */

const EdgeIcon = () => (
  <svg width="22" height="22" viewBox="0 0 22 22"><path d="M1 9.500C2 3.500 6.500.500 11.500.500c6 0 9.700 4.500 9.500 10.500v2H7.500c.2 3.200 3 4.800 6.200 4.800 2.200 0 4.300-.7 6-1.700v4.200C17.800 21.300 15.500 22 12.700 22 6.800 22 3 18.500 3 13.500c0-3.300 1.800-6.200 5-7.700-1 1.200-1.500 2.500-1.600 3.900h8.500c0-2.900-1.500-4.900-4.900-4.900C6.500 4.800 3 6.800 1 9.500Z" fill="#0078d7" /></svg>
);
const ExplorerIcon = () => (
  <svg width="22" height="20" viewBox="0 0 22 20"><path d="M0 1h9l2 2.500H0Z" fill="#e0a21b" /><path d="M0 3h21v15H0Z" fill="#fcd667" /><path d="M4 19v-8h14v8h-4v-4H8v4Z" fill="#3a8fdc" /></svg>
);
const StoreIcon = () => (
  <svg width="24" height="24" viewBox="0 0 24 24"><path d="M6.500 7V1.500h11V7" fill="none" stroke="#2b2b2b" strokeWidth="1.800" /><path d="M.5 6.500h23V24H.5Z" fill="#2b2b2b" /><path d="M8 11h4v4H8z" fill="#f25022" /><path d="M13 11h4v4h-4z" fill="#7fba00" /><path d="M8 16h4v4H8z" fill="#00a4ef" /><path d="M13 16h4v4h-4z" fill="#ffb900" /></svg>
);
const MailIcon = () => (
  <svg width="24" height="23" viewBox="0 0 24 23"><path d="M0 7 12 0l12 7v6H0Z" fill="#0b5aa8" /><path d="M2 7h20v10H2Z" fill="#eef4fa" /><path d="M0 7.500 12 15l12-7.500V23H0Z" fill="#29a4ea" /><path d="M0 23 24 9v14Z" fill="#4fc1f5" /></svg>
);
const PsIcon = () => (
  <div className="flex h-[21px] w-[22px] items-center justify-center rounded-[4px] bg-[#001e36] font-['Open_Sans',sans-serif] text-[11px] font-bold text-[#31a8ff]">Ps</div>
);
const OperaIcon = () => (
  <svg width="23" height="23" viewBox="0 0 23 23"><ellipse cx="11.500" cy="11.500" rx="11.500" ry="11.500" fill="#e4122b" /><path d="M15 .600a11.500 11.500 0 0 1 0 21.800Z" fill="#a70014" /><ellipse cx="11.300" cy="11.500" rx="4.800" ry="8.300" fill="#d3e7ef" /></svg>
);
const StudioIcon = () => (
  <svg width="22" height="22" viewBox="0 0 22 22"><circle cx="11" cy="11" r="11" fill="#fff" /><path d="M5 7h10v8H7Z" fill="#3f84f2" /><path d="M6 7a5 4.500 0 0 1 8.500-1L13 8Z" fill="#35c97b" /><path d="M8.500 16l2.600-7.500L13.500 16M9.500 13.500h3M15.300 8.500v7.500" stroke="#173049" strokeWidth="1.200" fill="none" /></svg>
);
const FirefoxIcon = () => (
  <svg width="23" height="23" viewBox="0 0 23 23"><defs><linearGradient id="ffx" x1=".8" y1="0" x2=".2" y2="1"><stop offset="0" stopColor="#ffe14a" /><stop offset=".5" stopColor="#ff8a2a" /><stop offset="1" stopColor="#f0246e" /></linearGradient></defs><path d="M14 0c1 3 3 3.500 5 5.500 2 2 3.500 4.500 3.500 7.500a11 10 0 0 1-22 0C.500 9 1.500 6.500 3 3.500L5 6l3-2 2 1.500C11 3 12.500 1 14 0Z" fill="url(#ffx)" /><circle cx="12" cy="12.500" r="5" fill="#6a3ce0" /><path d="M4 9c3-2 6 0 8 1-2 .5-3 1.500-3 2.500-2.500 0-4-1.500-5-3.500Z" fill="#ffa62e" /></svg>
);
const TelegramIcon = () => (
  <div className="relative">
    <svg width="22" height="22" viewBox="0 0 22 22"><circle cx="11" cy="11" r="11" fill="#2ca0da" /><path d="M3.500 11 17 5.500 14.800 17l-4-3L8.500 16l-.3-3.500Z" fill="#fff" /></svg>
    <div className="absolute top-[14px] left-[9px] flex h-[11px] w-[16px] items-center justify-center rounded-[3px] bg-[#f0413a] font-['Open_Sans',sans-serif] text-[8px] leading-none text-white">..50</div>
  </div>
);
const BirdIcon = () => (
  <svg width="24" height="24" viewBox="0 0 24 24"><circle cx="12" cy="12" r="12" fill="#e0242c" /><circle cx="12" cy="13.500" r="8" fill="#26221f" /><path d="M3.500 9C6 3 16 1.500 20 8.500 15 6.500 9 7 3.500 9Z" fill="#43a53c" /><circle cx="9" cy="11.500" r="2" fill="#fff" /><circle cx="15" cy="11.500" r="2" fill="#fff" /><circle cx="9.300" cy="11.500" r=".9" /><circle cx="14.700" cy="11.500" r=".9" /><path d="M10 13.500h4.500L12 19Z" fill="#f08a24" /></svg>
);
const WinrarIcon = () => (
  <svg width="24" height="23" viewBox="0 0 24 23"><path d="M0 1h24v7H0Z" fill="#a81e4a" /><path d="M0 8h24v7H0Z" fill="#3a4fb0" /><path d="M0 15h24v7H0Z" fill="#2e8a3e" /><path d="M0 2.500h24M0 9.500h24M0 16.500h24" stroke="#fff" strokeWidth=".6" opacity=".5" /><path d="M3 1v21M20.500 1v21" stroke="#e6b422" strokeWidth="1.200" /><path d="M8.500 1h7v21h-7Z" fill="#b8692a" /><path d="M9 4.500 12 1l3 3.500V9l1 2v4H8v-4l1-2Z" fill="#f1a935" /><path d="M9 11v4h6v-4M12 11.500V15" stroke="#fff" strokeWidth="1" fill="none" /></svg>
);
const ChromeIcon = () => (
  <div className="relative">
    <svg width="23" height="23" viewBox="0 0 24 24" className="block"><circle cx="12" cy="12" r="12" fill="#34a353" /><path d="M1.600 6A12 12 0 0 1 22.400 6L12 6.600 7.200 14.700Z" fill="#e0443a" /><path d="M22.400 6A12 12 0 0 1 12 24l5-9.200L12 6.600V6Z" fill="#fbc92e" /><circle cx="12" cy="12" r="5.600" fill="#fff" /><circle cx="12" cy="12" r="4.400" fill="#3f82f3" /></svg>
    <div className="absolute top-[9px] left-[9px] flex h-[16px] w-[16px] items-center justify-center rounded-full bg-[#5d4037] font-['Roboto',sans-serif] text-[9px] leading-none text-white">M</div>
  </div>
);
const DefenderIcon = () => (
  <svg width="18" height="18" viewBox="0 0 18 18"><path d="M9 0c2.500 1.500 5 2.200 8.500 2.500V8c0 5-4 8.500-8.500 10C4.500 16.500.500 13 .500 8V2.500C4 2.200 6.500 1.500 9 0Z" fill="#000" /><path d="M9 0v18M0 8.500h18" stroke="#d3e2ec" strokeWidth="1.200" /></svg>
);
const MonitorIcon = () => (
  <svg width="24" height="22" viewBox="0 0 24 22"><path d="M0 5h6v13H1Z" fill="#b9bdb9" /><path d="M1 8h4M1 11h4" stroke="#4b554b" /><path d="M6 1.500 23.500 2.500 22 15.500 5 14Z" fill="#e4e6e8" stroke="#9a9ea2" /><path d="M8 3.500l13 .8-1 9-12.500-1Z" fill="#fff" /><path d="M8 11l2-1 1.500-4 2 6 1.500-3 2 3 3-.5" stroke="#2b7fc4" fill="none" /><path d="M9 16h8l2 4H8Z" fill="#c9ccd0" /></svg>
);
const WordIcon = () => (
  <svg width="24" height="22" viewBox="0 0 24 22"><path d="M6 0h18v5.500H6Z" fill="#41a5ee" /><path d="M6 5.500h18V11H6Z" fill="#2b7cd3" /><path d="M6 11h18v5.500H6Z" fill="#185abd" /><path d="M6 16.500h18V22H6Z" fill="#103f91" /><rect y="5" width="13" height="12" rx="1" fill="#185abd" /><text x="6.500" y="14.500" textAnchor="middle" fontSize="10" fontWeight="bold" fontFamily="Open Sans, sans-serif" fill="#fff">W</text></svg>
);

const APPS = [
  [EdgeIcon, "one"], [ExplorerIcon, "many"], [StoreIcon, ""], [MailIcon, ""], [PsIcon, ""], [OperaIcon, ""], [StudioIcon, ""],
  [FirefoxIcon, "one"], [TelegramIcon, "one"], [BirdIcon, "one"], [WinrarIcon, "one"], [ChromeIcon, "active"],
  [DefenderIcon, "one"], [MonitorIcon, "one"], [WordIcon, "many"],
];

function Taskbar() {
  return (
    <div className={`relative flex h-[40px] w-[1920px] items-stretch bg-linear-to-r from-[#cde5ee] via-[#d2e2ec] via-60% to-[#dadaeb] ${SEGOE}`}>
      <div className="flex w-[48px] items-center pl-[16px]">
        <svg width="16" height="16" viewBox="0 0 16 16"><path d="M0 2.300 6.500 1.400v6.200H0ZM7.300 1.300 16 0v7.600H7.300ZM0 8.400h6.500v6.200L0 13.700ZM7.300 8.400H16V16l-8.700-1.300Z" /></svg>
      </div>
      <div className="flex w-[344px] items-center border border-[#c4c6c8] bg-white pl-[10px]">
        <Search size={18} strokeWidth={1.500} className="-scale-x-100 text-black" />
        <span className="ml-[11px] text-[15px] tracking-[-0.38px] text-[#333]">Type here to search</span>
      </div>
      <div className="flex w-[48px] items-center justify-center">
        <span className="h-[15px] w-[15px] rounded-full border-[2.5px] border-black" />
      </div>
      <div className="flex w-[50px] items-center justify-center">
        <svg width="17" height="15" viewBox="0 0 17 15" fill="none" stroke="#000"><path d="M.5 0v2.500h11V0M.5 15v-2.500h11V15M.5 4.500h11v6H.5ZM14.500 0v3M14.500 8v7" strokeWidth="1.200" /><path d="M13 5.500h3" strokeWidth="2.400" /></svg>
      </div>
      <div className="flex">
        {APPS.map(([Icon, state], i) => (
          <div key={i} className={`flex w-[49px] flex-col items-center ${state === "active" ? "bg-white/60" : ""}`}>
            <div className="flex h-[38px] items-center justify-center pt-px"><Icon /></div>
            {state === "one" && <div className="h-[2px] w-[40px] bg-[#0078d7]" />}
            {state === "active" && <div className="h-[2px] w-full bg-[#0078d7]" />}
            {state === "many" && <div className="flex h-[2px] w-[40px]"><span className="w-[32px] bg-[#0078d7]" /><span className="w-[8px] bg-[#66aee6]" /></div>}
          </div>
        ))}
      </div>
      <div className="ml-auto flex items-center text-[12px] text-black">
        <svg width="13" height="8" viewBox="0 0 13 8"><path d="M1 7l5.500-5.500L12 7" fill="none" stroke="#000" strokeWidth="1.300" /></svg>
        <svg width="16" height="12" viewBox="0 0 16 12" className="ml-[18px]"><path d="M0 2.500h5v2.500a2.500 2 0 0 1-5 0ZM1.200 0v3M3.800 0v3M2.500 6v4.500h2" stroke="#000" fill="none" /><path d="M6 2.500h8.500v8H4.500" fill="none" stroke="#000" /><path d="M6.500 4.500H13v4H6.500Z" /><path d="M15.500 5v3" stroke="#000" /></svg>
        <svg width="16" height="14" viewBox="0 0 16 14" className="ml-[16px]" fill="none" stroke="#000"><path d="M4.500 1.500h11v8H3.500M.5.500h4v4h-4zM2.500 5v8M8.500 10v3M5.500 13h6" /></svg>
        <svg width="17" height="14" viewBox="0 0 17 14" className="ml-[16px]" fill="none" stroke="#000"><path d="M1 4.500h2.500L7 1.500v11L3.500 9.500H1Z" /><path d="M9 5q1 2 0 4M11 3.500q2 3.500 0 7" /><path d="M13 2q3 5 0 10" stroke="#9aa0a8" /></svg>
        <span className="ml-[14px] w-[24px] tracking-[-0.5px]">ENG</span>
        <div className="ml-[10px] flex w-[54px] flex-col items-center leading-[18px] tracking-[-0.45px] whitespace-nowrap">
          <span>3:39 PM</span>
          <span>9/14/2021</span>
        </div>
        <div className="relative ml-[16px] h-[26px] w-[26px]">
          <svg width="17" height="17" viewBox="0 0 17 17" className="absolute top-[2px] left-0"><path d="M0 0h16v12h-5v4l-4-4H0Z" /><path d="M3 3.500h10M3 6h10M3 8.500h6" stroke="#d9dcea" /></svg>
          <div className="absolute top-[9px] left-[7px] flex h-[17px] w-[17px] items-center justify-center rounded-full border border-[#77797f] bg-[#cfcfd4]/90 text-[11px] leading-none">1</div>
        </div>
        <div className="ml-[10px] h-[40px] w-[5px] border-l border-[#a4a8b5]" />
      </div>
    </div>
  );
}

export default function App() {
  return (
    <div className="relative flex h-[1080px] w-[1920px] flex-col overflow-hidden bg-[#1e4a6c]">
      <FirefoxWindow />
      <div className="absolute top-0 left-[458px] h-[1039px] w-[932px] shadow-[0_4px_18px_3px_rgba(0,0,0,0.42)]" />
      <ChromeWindow />
      <Taskbar />
    </div>
  );
}
